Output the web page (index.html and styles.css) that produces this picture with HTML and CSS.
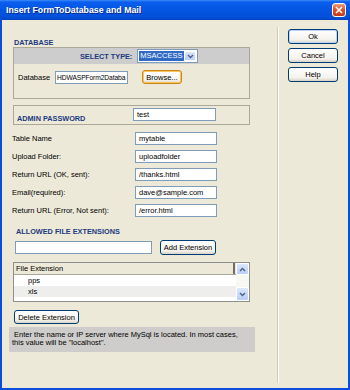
FILE: index.html
```html
<!DOCTYPE html>
<html>
<head lang="en">
    <meta charset="UTF-8">
    <title>Insert FormToDatabase and Mail</title>
    <link rel="stylesheet" href="styles.css">
</head>
<body>
<div class="window">
    <div class="titlebar">
        <span class="title">Insert FormToDatabase and Mail</span>
        <span class="close">
            <svg width="8" height="8" viewBox="0 0 8 8"><path d="M1 1L7 7M7 1L1 7" stroke="#fff" stroke-width="1.6"/></svg>
        </span>
    </div>
    <div class="client">
        <div class="form">
            <div class="heading db-heading">DATABASE</div>
            <div class="group db-group">
                <div class="band">
                    <span class="heading">SELECT TYPE:</span>
                    <div class="select">
                        <span class="sel-value">MSACCESS</span>
                        <span class="sel-arrow">
                            <svg width="7" height="5" viewBox="0 0 7 5"><path d="M1 1l2.5 2.5L6 1" fill="none" stroke="#4d6185" stroke-width="1.4"/></svg>
                        </span>
                    </div>
                </div>
                <div class="db-row">
                    <span class="db-label">Database</span>
                    <span class="input db-input">HDWASPForm2Databa</span>
                    <span class="btn browse">Browse...</span>
                </div>
            </div>
            <div class="group admin">
                <span class="heading admin-label">ADMIN PASSWORD</span>
                <span class="input admin-input">test</span>
            </div>
            <div class="rows">
                <div class="row"><span class="row-label">Table Name</span><span class="input">mytable</span></div>
                <div class="row"><span class="row-label">Upload Folder:</span><span class="input">uploadfolder</span></div>
                <div class="row"><span class="row-label">Return URL (OK, sent):</span><span class="input">/thanks.html</span></div>
                <div class="row"><span class="row-label">Email(required):</span><span class="input">dave@sample.com</span></div>
                <div class="row"><span class="row-label">Return URL (Error, Not sent):</span><span class="input">/error.html</span></div>
            </div>
            <div class="heading ext-heading">ALLOWED FILE EXTENSIONS</div>
            <div class="ext-row">
                <span class="input ext-input"></span>
                <span class="btn add-btn">Add Extension</span>
            </div>
            <div class="list">
                <div class="list-body">
                    <div class="list-head"><span class="head-cell">File Extension</span></div>
                    <div class="list-item">pps</div>
                    <div class="list-item alt">xls</div>
                </div>
                <div class="scrollbar">
                    <span class="sb-btn sb-up">
                        <svg width="7" height="5" viewBox="0 0 7 5"><path d="M1 4l2.5-2.5L6 4" fill="none" stroke="#4d6185" stroke-width="1.4"/></svg>
                    </span>
                    <span class="sb-track"></span>
                    <span class="sb-btn sb-down">
                        <svg width="7" height="5" viewBox="0 0 7 5"><path d="M1 1l2.5 2.5L6 1" fill="none" stroke="#4d6185" stroke-width="1.4"/></svg>
                    </span>
                </div>
            </div>
            <span class="btn delete-btn">Delete Extension</span>
            <div class="info">&nbsp;Enter the name or IP server where MySql is located. In most cases,<br>this value will be "localhost".</div>
        </div>
        <div class="divider"></div>
        <div class="actions">
            <span class="btn default">Ok</span>
            <span class="btn">Cancel</span>
            <span class="btn">Help</span>
        </div>
    </div>
</div>
</body>
</html>
```

FILE: styles.css
```css
* {
    box-sizing: border-box;
}
body {
    margin: 0;
    font-family: "Liberation Sans", Arial, sans-serif;
    font-size: 7.5px;
    color: #000;
}
.window {
    width: 350px;
    height: 390px;
    background: #0a4ddb;
    display: flex;
    flex-direction: column;
}
.titlebar {
    height: 20px;
    flex: none;
    display: flex;
    align-items: center;
    justify-content: space-between;
    padding: 0 4px 0 6px;
    background: linear-gradient(#3c8cf8 0, #0a5eee 2px, #0455e2 50%, #0250da 85%, #0642c0 100%);
}
.title {
    color: #fff;
    font-weight: bold;
    font-size: 8.8px;
    text-shadow: 1px 1px 0 #0a2a8a;
}
.close {
    width: 14px;
    height: 14px;
    border: 1px solid #fff;
    border-radius: 3px;
    background: linear-gradient(#eb9d80, #da542f 45%, #c43a17);
    display: flex;
    align-items: center;
    justify-content: center;
}
.client {
    flex: 1;
    margin: 0 2px 2px;
    background: #ece9d8;
    display: flex;
}
.form {
    width: 275px;
    padding: 18px 0 0 7px;
}
.divider {
    width: 1px;
    margin: 7px 0 5px;
    background: #d0ccba;
    box-shadow: 1px 0 0 #fff;
}
.actions {
    flex: 1;
    padding: 9px 0 0 10px;
    display: flex;
    flex-direction: column;
    gap: 4px;
}
.actions .btn {
    width: 50px;
    height: 15px;
}
.btn {
    display: flex;
    align-items: center;
    justify-content: center;
    height: 14px;
    border: 1px solid #003c74;
    border-radius: 3px;
    background: linear-gradient(#fff, #f3f2ec 75%, #d8d3c8);
    white-space: nowrap;
}
.btn.default {
    box-shadow: inset 0 0 0 1px #bcd4f6;
}
.heading {
    font-weight: bold;
    color: #1d3b80;
    font-size: 7.3px;
    line-height: 9px;
}
.input {
    display: block;
    height: 13px;
    line-height: 11px;
    padding: 0 3px;
    background: #fff;
    border: 1px solid #7f9db9;
    white-space: nowrap;
    overflow: hidden;
}

/* database group */
.db-heading {
    margin-left: 5px;
}
.group {
    margin-left: 4px;
    width: 237px;
    border: 1px solid #aca899;
}
.db-group {
    height: 52px;
}
.band {
    height: 16px;
    background: #cdcdcd;
    display: flex;
    align-items: center;
    padding-left: 66px;
    gap: 5px;
}
.select {
    display: flex;
    width: 61px;
    height: 14px;
    border: 1px solid #7f9db9;
    background: #fff;
    padding: 1px;
}
.sel-value {
    flex: 1;
    background: #316ac5;
    color: #fff;
    line-height: 10px;
    padding-left: 1px;
}
.sel-arrow, .sb-btn {
    width: 12px;
    display: flex;
    align-items: center;
    justify-content: center;
    background: linear-gradient(#dce7fd, #b9cdf7);
    border: 1px solid #fff;
    border-radius: 2px;
}
.db-row {
    display: flex;
    align-items: center;
    margin-top: 6px;
    padding-left: 4px;
    height: 14px;
}
.db-label {
    width: 37px;
}
.db-input {
    width: 73px;
    padding: 0 1px;
    font-size: 6.7px;
    letter-spacing: -0.1px;
}
.browse {
    width: 40px;
    margin-left: 14px;
    border-color: #c8861d;
    box-shadow: inset 0 0 0 1px #fbc55a;
}

/* admin password */
.admin {
    margin-top: 6px;
    height: 20px;
    display: flex;
    align-items: flex-start;
    padding: 2px 0 0 3px;
}
.admin-label {
    width: 116px;
    margin-top: 6px;
}
.admin-input {
    width: 83px;
}

/* fields */
.rows {
    margin-top: 4px;
    margin-left: 3px;
}
.row {
    height: 18px;
    display: flex;
    align-items: center;
}
.row-label {
    width: 123px;
}
.row .input {
    width: 82px;
}

/* extensions */
.ext-heading {
    margin-top: 8px;
    margin-left: 7px;
}
.ext-row {
    display: flex;
    align-items: center;
    height: 15px;
    margin-top: 4px;
    margin-left: 6px;
}
.ext-input {
    width: 137px;
}
.add-btn {
    width: 56px;
    height: 15px;
    margin-left: 8px;
}
.list {
    display: flex;
    margin-top: 7px;
    margin-left: 4px;
    width: 237px;
    height: 40px;
    border: 1px solid #8e8f8f;
    background: #fff;
}
.list-body {
    flex: 1;
}
.list-head {
    height: 12px;
    background: #ece9d8;
    border-bottom: 1px solid #aca899;
    display: flex;
}
.head-cell {
    width: 221px;
    padding-left: 2px;
    line-height: 11px;
    border-right: 2px solid #716f64;
}
.list-item {
    height: 11px;
    line-height: 11px;
    padding-left: 14px;
}
.list-item.alt {
    background: #eeeeec;
}
.scrollbar {
    width: 13px;
    display: flex;
    flex-direction: column;
    background: #f7f7f3;
}
.sb-btn {
    width: 13px;
    height: 12px;
}
.sb-track {
    flex: 1;
}
.sb-down {
    height: 14px;
}
.delete-btn {
    width: 65px;
    margin-top: 8px;
    margin-left: 5px;
}
.info {
    margin-top: 3px;
    width: 246px;
    height: 25px;
    background: #cecdcb;
    padding: 4px 3px 0 3px;
    line-height: 8px;
}
```
